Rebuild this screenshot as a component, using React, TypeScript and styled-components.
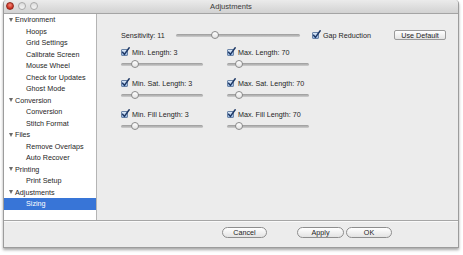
import React from 'react';
import styled, { createGlobalStyle } from 'styled-components';

const Global = createGlobalStyle`
  html, body { margin: 0; padding: 0; background: #ffffff; }
  body {
    width: 463px; height: 255px; overflow: hidden;
    font-family: "Liberation Sans", Arial, sans-serif;
    font-size: 7.2px; color: #1e1e1e;
  }
`;

const Page = styled.div`
  width: 463px;
  height: 255px;
  padding-left: 3px;
  box-sizing: border-box;
`;

const Window = styled.div`
  width: 456px;
  height: 248px;
  box-sizing: border-box;
  border: 1px solid #9c9c9c;
  border-top: none;
  border-radius: 4px 4px 0 0;
  background: #ececec;
  box-shadow: 0 2px 3px rgba(0, 0, 0, 0.35);
  display: flex;
  flex-direction: column;
  overflow: hidden;
`;

const TitleBar = styled.div`
  height: 14px;
  flex: none;
  box-sizing: border-box;
  background: linear-gradient(#ebebeb, #d2d2d2);
  border-bottom: 1px solid #a4a4a4;
  position: relative;
  display: flex;
  align-items: center;
  justify-content: center;
  font-size: 7.6px;
  color: #3a3a3a;
`;

const Lights = styled.div`
  position: absolute;
  left: 2px;
  top: 2px;
  display: flex;
  gap: 4px;
`;

const Light = styled.div<{ $red?: boolean }>`
  width: 8px;
  height: 8px;
  border-radius: 50%;
  box-sizing: border-box;
  background: ${p => (p.$red ? 'radial-gradient(circle at 50% 35%, #f58a7a, #c8291b 70%)' : 'linear-gradient(#dcdcdc, #f4f4f4)')};
  border: 1px solid ${p => (p.$red ? '#8f2a20' : '#a8a8a8')};
`;

const Body = styled.div`
  flex: 1;
  display: flex;
  min-height: 0;
`;

const Sidebar = styled.div`
  width: 93px;
  flex: none;
  box-sizing: border-box;
  background: #ffffff;
  border-right: 1px solid #b4b4b4;
  display: flex;
  flex-direction: column;
`;

const TreeRow = styled.div<{ $child?: boolean; $selected?: boolean }>`
  height: 11.5px;
  flex: none;
  display: flex;
  align-items: center;
  padding-left: ${p => (p.$child ? '22px' : '5px')};
  background: ${p => (p.$selected ? '#3875d7' : 'transparent')};
  color: ${p => (p.$selected ? '#ffffff' : '#1e1e1e')};
  white-space: nowrap;
`;

const Disclosure = styled.span`
  width: 0;
  height: 0;
  border-left: 2.5px solid transparent;
  border-right: 2.5px solid transparent;
  border-top: 4px solid #6a6a6a;
  margin-right: 2px;
`;

const Main = styled.div`
  flex: 1;
  padding: 15px 12px 0 24px;
  display: flex;
  flex-direction: column;
`;

const TopRow = styled.div`
  height: 12px;
  display: flex;
  align-items: center;
`;

const SensLabel = styled.span`
  width: 55px;
  flex: none;
  white-space: nowrap;
`;

const SliderTrack = styled.div<{ $width: number }>`
  width: ${p => p.$width}px;
  height: 3px;
  flex: none;
  border-radius: 2px;
  background: linear-gradient(#9a9a9a, #cfcfcf);
  position: relative;
`;

const Knob = styled.div`
  position: absolute;
  top: 50%;
  width: 8px;
  height: 8px;
  margin: -4px 0 0 -4px;
  box-sizing: border-box;
  border-radius: 50%;
  border: 1px solid #8a8a8a;
  background: linear-gradient(#ffffff, #e2e2e2);
`;

const CheckWrap = styled.label<{ $ml?: number }>`
  display: flex;
  align-items: center;
  gap: 4px;
  margin-left: ${p => p.$ml ?? 0}px;
  white-space: nowrap;
`;

const Box = styled.span`
  width: 7px;
  height: 7px;
  flex: none;
  box-sizing: border-box;
  border: 1px solid #6a84a8;
  border-radius: 1px;
  background: linear-gradient(#dbe8f7, #98b9e3);
  position: relative;
`;

const CheckMark = styled.svg`
  position: absolute;
  left: -1px;
  top: -3px;
  overflow: visible;
`;

const RectButton = styled.button`
  margin-left: auto;
  width: 52px;
  height: 10px;
  padding: 0;
  box-sizing: border-box;
  border: 1px solid #9a9a9a;
  border-radius: 2px;
  background: linear-gradient(#ffffff, #e4e4e4);
  font: inherit;
  color: #1e1e1e;
  display: flex;
  align-items: center;
  justify-content: center;
`;

const PairGrid = styled.div`
  margin-top: 6px;
  display: grid;
  grid-template-columns: 106px 106px;
  row-gap: 9px;
`;

const Pair = styled.div`
  display: flex;
  flex-direction: column;
  gap: 2px;
`;

const PairLine = styled.div`
  height: 10px;
  display: flex;
  align-items: center;
`;

const Footer = styled.div`
  height: 27px;
  flex: none;
  box-sizing: border-box;
  border-top: 1px solid #a6a6a6;
  box-shadow: inset 0 1px 0 #fafafa;
  display: flex;
  align-items: flex-start;
  padding: 6px 0 0 218px;
`;

const PillButton = styled.button<{ $ml?: number; $w: number }>`
  width: ${p => p.$w}px;
  height: 11px;
  margin-left: ${p => p.$ml ?? 0}px;
  padding: 0;
  box-sizing: border-box;
  border: 1px solid #8e8e8e;
  border-radius: 6px;
  background: linear-gradient(#ffffff, #e3e3e3);
  font: inherit;
  color: #1e1e1e;
  display: flex;
  align-items: center;
  justify-content: center;
`;

const Check: React.FC<{ label: string; ml?: number }> = ({ label, ml }) => (
  <CheckWrap $ml={ml}>
    <Box>
      <CheckMark width="9" height="9" viewBox="0 0 9 9">
        <path d="M1.6 5.2 L3.4 7.4 L8.2 0.8" fill="none" stroke="#1c3765" strokeWidth="1.5" strokeLinecap="round" strokeLinejoin="round" />
      </CheckMark>
    </Box>
    <span>{label}</span>
  </CheckWrap>
);

const Slider: React.FC<{ width: number; pos: number }> = ({ width, pos }) => (
  <SliderTrack $width={width}>
    <Knob style={{ left: pos }} />
  </SliderTrack>
);

const tree: { label: string; child?: boolean; selected?: boolean }[] = [
  { label: 'Environment' },
  { label: 'Hoops', child: true },
  { label: 'Grid Settings', child: true },
  { label: 'Calibrate Screen', child: true },
  { label: 'Mouse Wheel', child: true },
  { label: 'Check for Updates', child: true },
  { label: 'Ghost Mode', child: true },
  { label: 'Conversion' },
  { label: 'Conversion', child: true },
  { label: 'Stitch Format', child: true },
  { label: 'Files' },
  { label: 'Remove Overlaps', child: true },
  { label: 'Auto Recover', child: true },
  { label: 'Printing' },
  { label: 'Print Setup', child: true },
  { label: 'Adjustments' },
  { label: 'Sizing', child: true, selected: true },
];

const pairs = [
  ['Min. Length: 3', 'Max. Length: 70'],
  ['Min. Sat. Length: 3', 'Max. Sat. Length: 70'],
  ['Min. Fill Length: 3', 'Max. Fill Length: 70'],
];

export default function App() {
  return (
    <Page>
      <Global />
      <Window>
        <TitleBar>
          <Lights>
            <Light $red />
            <Light />
            <Light />
          </Lights>
          Adjustments
        </TitleBar>
        <Body>
          <Sidebar>
            {tree.map((t, i) => (
              <TreeRow key={i} $child={t.child} $selected={t.selected}>
                {!t.child && <Disclosure />}
                {t.label}
              </TreeRow>
            ))}
          </Sidebar>
          <Main>
            <TopRow>
              <SensLabel>Sensitivity: 11</SensLabel>
              <Slider width={124} pos={39} />
              <Check label="Gap Reduction" ml={12} />
              <RectButton>Use Default</RectButton>
            </TopRow>
            <PairGrid>
              {pairs.map((row, ri) =>
                row.map((label, ci) => (
                  <Pair key={`${ri}-${ci}`}>
                    <PairLine>
                      <Check label={label} />
                    </PairLine>
                    <PairLine>
                      <Slider width={82} pos={ci === 0 ? 14 : 12} />
                    </PairLine>
                  </Pair>
                ))
              )}
            </PairGrid>
          </Main>
        </Body>
        <Footer>
          <PillButton $w={45}>Cancel</PillButton>
          <PillButton $w={47} $ml={30}>Apply</PillButton>
          <PillButton $w={46} $ml={2}>OK</PillButton>
        </Footer>
      </Window>
    </Page>
  );
}
